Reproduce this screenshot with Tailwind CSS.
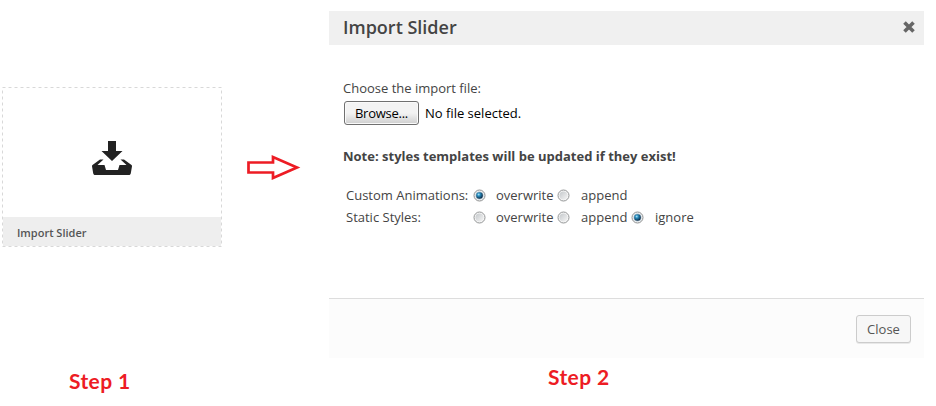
<!DOCTYPE html>
<html lang="en">
<head>
<meta charset="utf-8">
<title>Import Slider</title>
<script src="https://cdn.jsdelivr.net/npm/@tailwindcss/browser@4"></script>
</head>
<body class="bg-white">
<main class="flex h-[406px] w-[936px] overflow-hidden bg-white font-['Open_Sans',sans-serif] text-[13px] text-[#444]">
  <section class="flex w-[224px] shrink-0 flex-col pl-[2px] pt-[87px]">
    <div class="relative flex h-[160px] w-[220px] flex-col p-px">
      <svg class="absolute inset-0" width="220" height="160" fill="none" stroke="#d8d8d8" stroke-dasharray="3 3"><rect x=".5" y=".5" width="219" height="159"/></svg>
      <div class="flex flex-1 justify-center pt-[53px]">
        <svg width="40" height="34" viewBox="0 0 40 34" fill="#222">
          <path d="M16 0h8v10h6.500L20 20 9.500 10H16z"/>
          <path d="M8 18.500h3.500L5.500 24H12.500L14 29h12l1.500-5h7L28.500 18.500H32L39.500 24c.4.300.5.700.5 1.200l-1.200 7c-.2 1.200-.8 1.800-2 1.800H3.200c-1.200 0-1.800-.6-2-1.800L0 25.200c0-.5.100-.9.500-1.200z"/>
        </svg>
      </div>
      <div class="flex h-[29px] items-center bg-[#eee] pl-[14px] pt-[4px] text-[11px] font-semibold text-[#555]">Import Slider</div>
    </div>
    <div class="mt-[121px] pl-[67px] font-['Lato',sans-serif] text-[21px] font-bold leading-[26px] tracking-[0.4px] text-[#ed1c24]">Step 1</div>
  </section>

  <div class="w-[105px] shrink-0 pl-[23px] pt-[154px]">
    <svg width="54" height="26" viewBox="0 0 54 26" fill="none" stroke="#ed1c24" stroke-width="2.700"><path d="M1.500 8.500H26V3L50 13.500 26 24V18.500H1.500z"/></svg>
  </div>

  <section class="flex w-[595px] shrink-0 flex-col pt-[11px]">
    <header class="flex h-[34px] items-center justify-between bg-[#f0f0f0] pl-[14px] pr-[9px]">
      <h1 class="-mt-[2px] text-[18px] font-semibold leading-[24px]">Import Slider</h1>
      <svg width="12" height="12" viewBox="0 0 12 12" class="-mt-[2px]" stroke="#666" stroke-width="3.600"><path d="M1.500 1.500l9 9M10.500 1.500l-9 9"/></svg>
    </header>
    <div class="h-[253px] pl-[14px] pt-[34px]">
      <p class="leading-[18px]">Choose the import file:</p>
      <div class="mt-[4px] flex h-[24px] items-center pl-px text-black">
        <button class="h-[24px] w-[75px] rounded-[3px] border border-[#707070] bg-gradient-to-b from-[#f3f3f3] from-50% to-[#cfcfcf] to-100% leading-[22px] tracking-[-0.25px] shadow-[inset_0_0_0_1px_#fafafa]">Browse...</button>
        <span class="ml-[6px] pt-[2px]">No file selected.</span>
      </div>
      <p class="mt-[22px] font-bold leading-[18px]">Note: styles templates will be updated if they exist!</p>
      <div class="mt-[19px] grid w-[360px] grid-cols-[127px_23px_61px_24px_50px_24px_50px] items-center pl-[3px] leading-[22px]">
        <span>Custom Animations:</span>
        <svg width="13" height="13"><use href="#on"/></svg><span>overwrite</span>
        <svg width="13" height="13"><use href="#off"/></svg><span>append</span>
        <span></span><span></span>
        <span>Static Styles:</span>
        <svg width="13" height="13"><use href="#off"/></svg><span>overwrite</span>
        <svg width="13" height="13"><use href="#off"/></svg><span>append</span>
        <svg width="13" height="13"><use href="#on"/></svg><span>ignore</span>
      </div>
    </div>
    <footer class="flex h-[60px] items-start justify-end border-t border-[#ddd] bg-[#fcfcfc] pr-[13px] pt-[16px]">
      <button class="h-[28px] w-[55px] rounded-[3px] border border-[#ccc] bg-[#f7f7f7] leading-[26px] text-[#555] shadow-[0_1px_0_rgba(0,0,0,0.08)]">Close</button>
    </footer>
    <div class="mt-[6px] pl-[219px] font-['Lato',sans-serif] text-[21px] font-bold leading-[26px] tracking-[0.4px] text-[#ed1c24]">Step 2</div>
  </section>
</main>
<svg class="absolute" width="0" height="0">
  <defs>
    <linearGradient id="face" x1="0" y1="0" x2="1" y2="1"><stop stop-color="#c4c8cb"/><stop offset="1" stop-color="#f5f5f5"/></linearGradient>
    <radialGradient id="ball" cx=".38" cy=".35" r=".65"><stop stop-color="#b5e9fa"/><stop offset=".35" stop-color="#2a8fc0"/><stop offset="1" stop-color="#0b2c49"/></radialGradient>
    <g id="off"><circle cx="6.500" cy="6.500" r="5.500" fill="#f6f6f6" stroke="#949697"/><circle cx="6.500" cy="6.500" r="4" fill="url(#face)"/></g>
    <g id="on"><circle cx="6.500" cy="6.500" r="5.500" fill="#f4f6f7" stroke="#8e8f8f"/><circle cx="6.500" cy="6.500" r="4" fill="#b5c5d0"/><circle cx="6.500" cy="6.500" r="3.300" fill="url(#ball)"/></g>
  </defs>
</svg>
</body>
</html>
